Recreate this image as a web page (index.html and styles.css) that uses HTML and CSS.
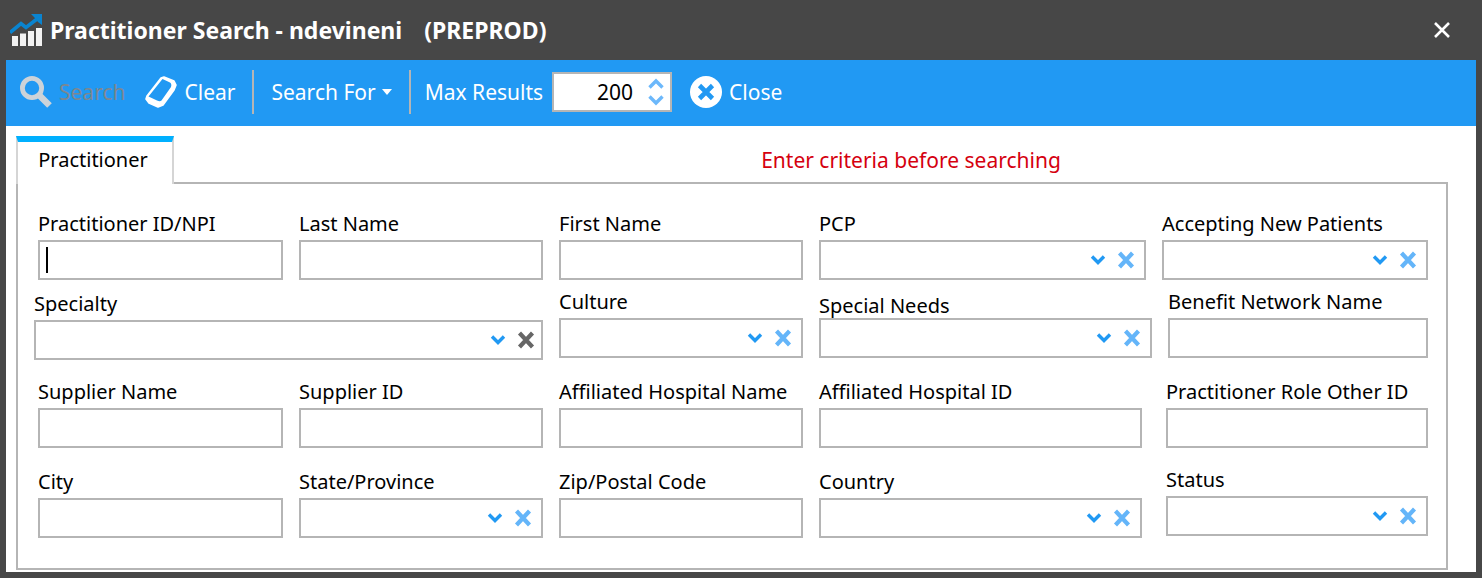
FILE: index.html
```html
<!DOCTYPE html>
<html lang="en">
<head>
<meta charset="utf-8">
<title>Practitioner Search</title>
<link rel="stylesheet" href="styles.css">
</head>
<body>
<svg class="defs" aria-hidden="true">
  <symbol id="chevron" viewBox="0 0 16 12"><path d="M2 2.5L8 8.5L14 2.5" fill="none" stroke="currentColor" stroke-width="3.4"/></symbol>
  <symbol id="cross" viewBox="0 0 18 18"><path d="M2.5 2L15.500 16M15.500 2L2.500 16" fill="none" stroke="currentColor" stroke-width="4.200"/></symbol>
</svg>
<div class="window">
  <header class="titlebar">
    <svg class="app-icon" viewBox="0 0 32 32" aria-hidden="true">
      <path d="M2 22h6v10H2zM10 19.500h6v12.500h-6zM18 17h6v15h-6zM26 14h6v18h-6z" fill="#f2f2f2"/>
      <path d="M0 18.500L11 9.500L16 13.500L27 5" fill="none" stroke="#0a84d0" stroke-width="3.600"/>
      <path d="M21 0H32V11L28 8L24 3Z" fill="#0a84d0"/>
    </svg>
    <h1 class="title">Practitioner Search - ndevineni <span class="env">(PREPROD)</span></h1>
    <button class="window-close" aria-label="Close window"><svg viewBox="0 0 16 16"><path d="M1 1L15 15M15 1L1 15" stroke="#fff" stroke-width="2.600"/></svg></button>
  </header>
  <div class="toolbar">
    <button class="tool tool-search" disabled>
      <svg class="tool-icon" viewBox="0 0 32 32"><circle cx="12" cy="12" r="9.600" fill="none" stroke="#ccd3d9" stroke-width="4.800"/><path d="M18.500 18.500L29.500 29.500" stroke="#ccd3d9" stroke-width="6.500"/></svg>Search</button>
    <button class="tool tool-clear">
      <svg class="tool-icon" viewBox="0 0 32 32"><path d="M16 2L19 1L29 5L31 9L29 14L18 29L13 31L4 27L1 23L2 20Z" fill="#fff" stroke="#fff" stroke-width="1.600" stroke-linejoin="round"/><path d="M17.500 3L25 6.500Q27 8 26 11L16.500 24.500Q15 26 12 24.500L3.500 20.500Z" fill="#2199f3"/></svg>Clear</button>
    <span class="divider"></span>
    <button class="tool tool-menu">Search For <svg class="menu-caret" viewBox="0 0 10 6"><path d="M0 0H10L5 6Z" fill="#fff"/></svg></button>
    <span class="divider"></span>
    <label class="max-label" for="max">Max Results</label>
    <span class="spinner">
      <input id="max" type="text" inputmode="numeric" value="200">
      <span class="steps">
        <button class="step" aria-label="Increase"><svg viewBox="0 0 16 11"><path d="M1.500 9.500L8 3L14.500 9.500" fill="none" stroke="#6cb8fb" stroke-width="3.400"/></svg></button>
        <button class="step" aria-label="Decrease"><svg viewBox="0 0 16 11"><path d="M1.500 1.500L8 8L14.500 1.500" fill="none" stroke="#6cb8fb" stroke-width="3.400"/></svg></button>
      </span>
    </span>
    <button class="tool">
      <svg class="tool-icon" viewBox="0 0 32 32"><circle cx="16" cy="16" r="16" fill="#fff"/><path d="M9.500 9.500L22.500 22.500M22.500 9.500L9.500 22.500" stroke="#2199f3" stroke-width="4.600"/></svg>Close</button>
  </div>
  <main class="content">
    <div class="tab-strip">
      <button class="tab" role="tab" aria-selected="true">Practitioner</button>
      <p class="message">Enter criteria before searching</p>
    </div>
    <form class="panel">
      <div class="row row-1">
        <div class="field"><label for="pid">Practitioner ID/NPI</label><span class="text-box"><input class="box" id="pid" type="text"><span class="text-cursor"></span></span></div>
        <div class="field"><label for="last">Last Name</label><input class="box" id="last" type="text"></div>
        <div class="field"><label for="first">First Name</label><input class="box" id="first" type="text"></div>
        <div class="field"><label for="pcp">PCP</label><span class="box combo"><select id="pcp"><option></option></select><svg class="chevron"><use href="#chevron"/></svg><button type="button" class="reset" aria-label="Clear PCP"><svg><use href="#cross"/></svg></button></span></div>
        <div class="field"><label for="anp">Accepting New Patients</label><span class="box combo"><select id="anp"><option></option></select><svg class="chevron"><use href="#chevron"/></svg><button type="button" class="reset" aria-label="Clear accepting new patients"><svg><use href="#cross"/></svg></button></span></div>
      </div>
      <div class="row row-2">
        <div class="field field-low"><label for="spec">Specialty</label><span class="box combo combo-wide"><select id="spec"><option></option></select><svg class="chevron"><use href="#chevron"/></svg><button type="button" class="reset reset-dark" aria-label="Clear specialty"><svg><use href="#cross"/></svg></button></span></div>
        <div class="field"><label for="cult">Culture</label><span class="box combo"><select id="cult"><option></option></select><svg class="chevron"><use href="#chevron"/></svg><button type="button" class="reset" aria-label="Clear culture"><svg><use href="#cross"/></svg></button></span></div>
        <div class="field field-tight"><label for="needs">Special Needs</label><span class="box combo"><select id="needs"><option></option></select><svg class="chevron"><use href="#chevron"/></svg><button type="button" class="reset" aria-label="Clear special needs"><svg><use href="#cross"/></svg></button></span></div>
        <div class="field"><label for="bnn">Benefit Network Name</label><input class="box" id="bnn" type="text"></div>
      </div>
      <div class="row row-3">
        <div class="field"><label for="sname">Supplier Name</label><input class="box" id="sname" type="text"></div>
        <div class="field"><label for="sid">Supplier ID</label><input class="box" id="sid" type="text"></div>
        <div class="field"><label for="ahn">Affiliated Hospital Name</label><input class="box" id="ahn" type="text"></div>
        <div class="field field-short"><label for="ahi">Affiliated Hospital ID</label><input class="box" id="ahi" type="text"></div>
        <div class="field"><label for="role">Practitioner Role Other ID</label><input class="box" id="role" type="text"></div>
      </div>
      <div class="row row-4">
        <div class="field"><label for="city">City</label><input class="box" id="city" type="text"></div>
        <div class="field"><label for="state">State/Province</label><span class="box combo"><select id="state"><option></option></select><svg class="chevron"><use href="#chevron"/></svg><button type="button" class="reset" aria-label="Clear state"><svg><use href="#cross"/></svg></button></span></div>
        <div class="field"><label for="zip">Zip/Postal Code</label><input class="box" id="zip" type="text"></div>
        <div class="field field-short"><label for="country">Country</label><span class="box combo"><select id="country"><option></option></select><svg class="chevron"><use href="#chevron"/></svg><button type="button" class="reset" aria-label="Clear country"><svg><use href="#cross"/></svg></button></span></div>
        <div class="field field-high"><label for="status">Status</label><span class="box combo"><select id="status"><option></option></select><svg class="chevron"><use href="#chevron"/></svg><button type="button" class="reset" aria-label="Clear status"><svg><use href="#cross"/></svg></button></span></div>
      </div>
    </form>
  </main>
</div>
</body>
</html>
```
FILE: styles.css
```css
* { box-sizing: border-box; }
body { margin: 0; background: #474747; color: #000; font: 20px/28px "Noto Sans", Tahoma, sans-serif; }
button, input, select { font: inherit; color: inherit; border: 0; background: none; padding: 0; margin: 0; appearance: none; border-radius: 0; outline: 0; min-width: 0; }
svg { display: block; flex: none; }
.defs { display: none; }
.window { display: flex; flex-direction: column; min-height: 100vh; padding: 0 6px 6px; }

.titlebar { display: flex; align-items: center; height: 60px; padding: 0 24px 0 4px; color: #fff; }
.app-icon { width: 32px; height: 32px; }
.title { flex: 1; margin: 0 0 0 8px; font-size: 23px; font-weight: 700; white-space: nowrap; }
.env { margin-left: 16px; }
.window-close svg { width: 16px; height: 16px; }
.window-close { padding: 2px; }

.toolbar { display: flex; align-items: center; height: 66px; padding: 0 0 2px 14px; background: #2199f3; color: #fff; font-size: 21px; white-space: nowrap; }
.tool { display: flex; align-items: center; gap: 7px; }
.tool-icon { width: 32px; height: 32px; }
.tool-search { color: #7d8790; }
.tool-clear { margin-left: 20px; }
.tool-menu { gap: 6px; }
.menu-caret { width: 10px; height: 6px; }
.divider { width: 2px; height: 44px; margin: 0 17px; background: #b5b5b5; }
.divider + .max-label { margin-left: -3px; }
.spinner { display: flex; align-items: center; width: 120px; height: 40px; margin: 0 18px 0 9px; padding-right: 6px; border: 2px solid #b5b5b5; background: #fff; color: #000; }
.spinner input { flex: 1; width: 0; text-align: right; }
.steps { display: grid; gap: 6px; margin-left: 15px; }
.step svg { width: 16px; height: 11px; }

.content { flex: 1; display: flex; flex-direction: column; padding: 10px 28px 2px 10px; background: #fff; }
.tab-strip { display: flex; height: 48px; z-index: 1; }
.tab { width: 158px; padding: 0 4px 6px 0; border: 2px solid #d5d5d5; border-top: 6px solid #00b0ff; border-bottom: 0; background: #fff; }
.message { flex: 1; margin: 0; padding: 10px 0 0 200px; color: #d5000f; font-size: 21px; text-align: center; }
.panel { flex: 1; margin-top: -2px; padding: 26px 18px 30px; border: 2px solid #b5b5b5; }

.row { display: grid; column-gap: 16px; }
.row-1 { grid-template-columns: 245fr 244fr 244fr 327fr 266fr; margin-left: 2px; }
.row-2 { grid-template-columns: 509fr 244fr 333fr 260fr; margin: 8px 0 18px -2px; align-items: start; }
.row-3 { grid-template-columns: 245fr 244fr 244fr 331fr 262fr; margin: 0 0 18px 2px; }
.row-4 { grid-template-columns: 245fr 244fr 244fr 331fr 262fr; margin-left: 2px; align-items: end; }
.field { display: flex; flex-direction: column; gap: 2px; min-width: 0; }
.field label { white-space: nowrap; }
.field-low { padding-top: 2px; }
.field-high { padding-bottom: 2px; }
.field-short { padding-right: 8px; }
.field-tight label { padding-top: 8px; line-height: 20px; }
.box { width: 100%; height: 40px; border: 2px solid #b5b5b5; background: #fff; }
input.box { padding: 0 6px; }
.text-box { display: grid; align-items: center; }
.text-box > * { grid-area: 1 / 1; }
.text-cursor { width: 2px; height: 26px; margin-left: 8px; background: #000; }

.combo { display: grid; grid-template-columns: 1fr 16px 18px; column-gap: 11px; align-items: center; padding-right: 9px; }
.combo-wide { padding-right: 6px; }
.combo select { grid-area: 1 / 1 / 2 / -1; width: 100%; height: 36px; }
.chevron { grid-area: 1 / 2; width: 16px; height: 12px; color: #2199f3; pointer-events: none; }
.reset { grid-area: 1 / 3; color: #64b5f9; }
.reset svg { width: 18px; height: 18px; }
.reset-dark { color: #666; }
```
